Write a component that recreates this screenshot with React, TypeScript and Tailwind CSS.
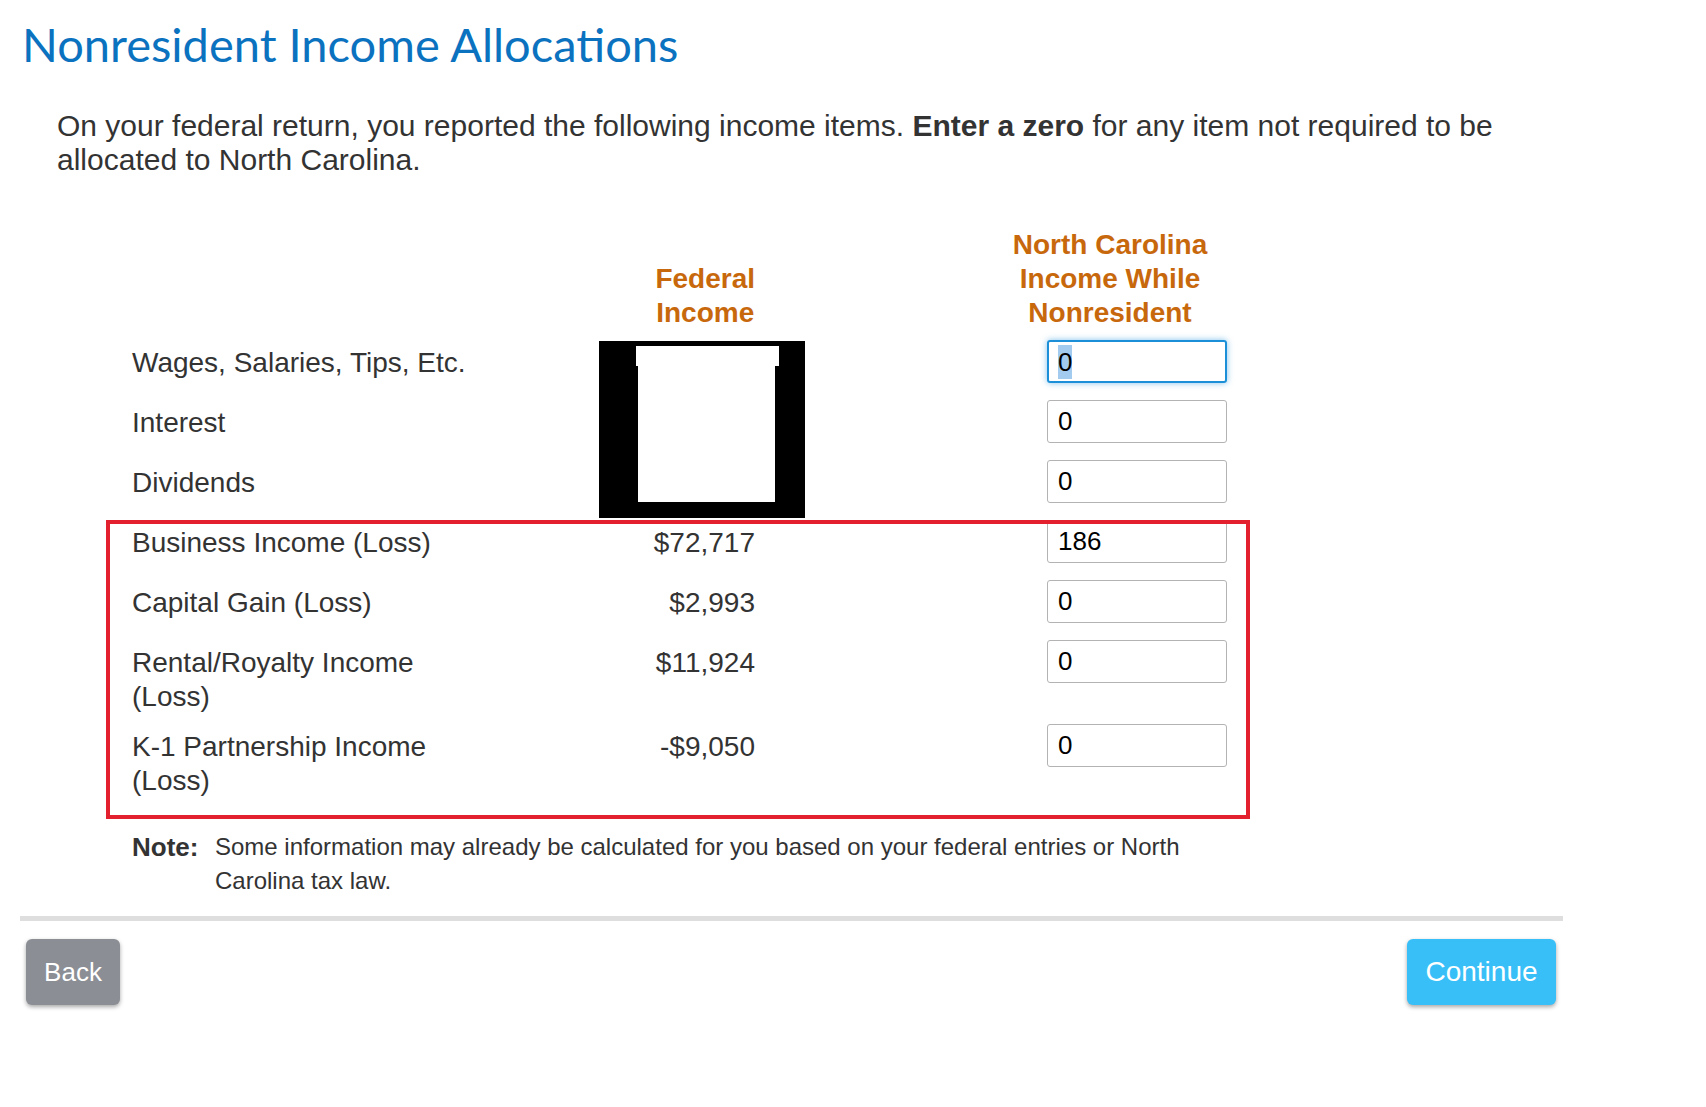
const rows = [
  { label: "Wages, Salaries, Tips, Etc.", federal: "", nc: "0", focused: true },
  { label: "Interest", federal: "", nc: "0" },
  { label: "Dividends", federal: "", nc: "0" },
  { label: "Business Income (Loss)", federal: "$72,717", nc: "186" },
  { label: "Capital Gain (Loss)", federal: "$2,993", nc: "0" },
  { label: ["Rental/Royalty Income", "(Loss)"], federal: "$11,924", nc: "0" },
  { label: ["K-1 Partnership Income", "(Loss)"], federal: "-$9,050", nc: "0" },
];

export default function App() {
  return (
    <div className="relative w-[1706px] min-h-[1107px] bg-white font-['Liberation_Sans',Arial,sans-serif] text-[#333333]">
      {/* Title */}
      <h1 className="pl-[22px] pt-[16px] font-['Lato',sans-serif] text-[47px] leading-[56px] font-normal text-[#0b72c0]">
        Nonresident Income Allocations
      </h1>

      <p className="ml-[57px] mt-[37px] w-[1450px] text-[30px] leading-[34px]">
        On your federal return, you reported the following income items. <b>Enter a zero</b> for any
        item not required to be allocated to North Carolina.
      </p>

      {/* Table */}
      <div className="ml-[108px] mt-[51px] w-[1141px]">
        <div className="grid grid-cols-[440px_183px_292px_180px] items-end pl-[24px] text-[28px] leading-[34px] font-bold whitespace-nowrap text-[#c8680c]">
          <div />
          <div className="text-right">
            <div className="inline-block text-center">
              Federal
              <br />
              Income
            </div>
          </div>
          <div className="col-span-2">
            <div className="ml-[252px] w-[206px] text-center">
              North Carolina
              <br />
              Income While
              <br />
              Nonresident
            </div>
          </div>
        </div>

        <div className="mt-[10px] grid grid-cols-[440px_183px_292px_180px] gap-y-[17px] pl-[24px]">
          {rows.map((row, i) => (
            <div key={i} className="contents">
              {Array.isArray(row.label) ? (
                <div className="-mb-[7px] pt-[6px] text-[28px] leading-[34px]">
                  {row.label.map((l) => (
                    <div key={l}>{l}</div>
                  ))}
                </div>
              ) : (
                <div className="pt-[6px] text-[28px] leading-[34px]">{row.label}</div>
              )}
              <div className="pt-[6px] text-right text-[28px] leading-[34px]">{row.federal}</div>
              <div />
              {row.focused ? (
                <div className="flex h-[43px] w-[180px] items-center rounded-[3px] border-2 border-[#1b8fd8] px-[9px] text-[26px] text-black shadow-[0_0_6px_rgba(27,143,216,0.55)]">
                  <span className="bg-[#a3cbef] leading-[34px]">{row.nc}</span>
                </div>
              ) : (
                <input
                  readOnly
                  defaultValue={row.nc}
                  className="h-[43px] w-[180px] rounded-[3px] border border-[#b3b3b3] bg-white px-[10px] font-['Liberation_Sans',Arial,sans-serif] text-[26px] text-black outline-none"
                />
              )}
            </div>
          ))}
        </div>
      </div>

      {/* Note */}
      <div className="ml-[132px] mt-[39px] flex w-[1100px]">
        <div className="w-[83px] shrink-0 text-[26px] leading-[34px] font-bold">Note:</div>
        <div className="w-[1000px] text-[24px] leading-[34px]">
          Some information may already be calculated for you based on your federal entries or North
          Carolina tax law.
        </div>
      </div>

      <div className="ml-[20px] mt-[18px] h-[5px] w-[1543px] bg-[#dedede]" />

      {/* Buttons */}
      <div className="mt-[18px] flex w-[1556px] justify-between pl-[26px]">
        <button className="h-[66px] w-[94px] rounded-[6px] bg-[#8b8e94] text-[26px] text-white shadow-[0_2px_4px_rgba(0,0,0,0.35)]">
          Back
        </button>
        <button className="h-[66px] w-[149px] rounded-[6px] bg-[#38bff8] text-[28px] text-white shadow-[0_2px_4px_rgba(0,0,0,0.35)]">
          Continue
        </button>
      </div>

      {/* Redaction over federal values */}
      <div className="absolute left-[599px] top-[341px] h-[177px] w-[206px] bg-black">
        <div className="absolute left-[37px] top-[5px] h-[20px] w-[143px] bg-white" />
        <div className="absolute left-[39px] top-[22px] h-[139px] w-[137px] bg-white" />
      </div>

      {/* Red annotation box */}
      <div className="pointer-events-none absolute left-[106px] top-[520px] h-[299px] w-[1144px] border-[4px] border-[#e3202e]" />
    </div>
  );
}
